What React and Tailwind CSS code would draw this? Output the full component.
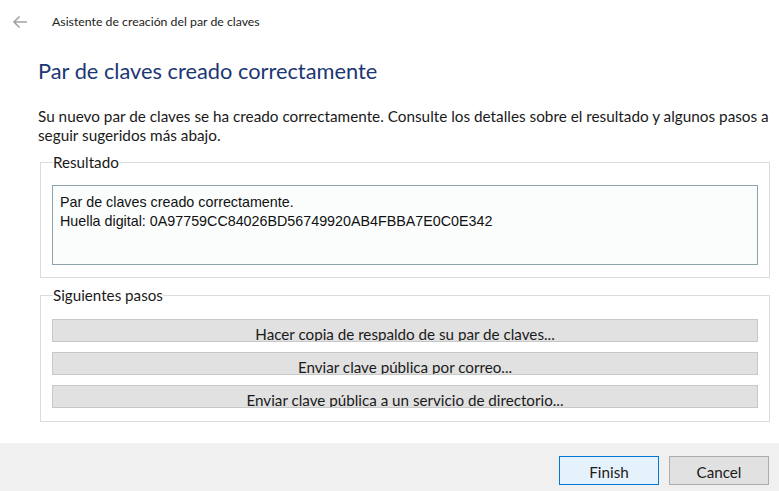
import { useState } from "react";

const STEPS = [
  "Hacer copia de respaldo de su par de claves...",
  "Enviar clave pública por correo...",
  "Enviar clave pública a un servicio de directorio...",
];

function BackArrow() {
  return (
    <svg width="16" height="14" viewBox="0 0 16 14" fill="none">
      <path d="M15 7H2M7.5 1.5L2 7l5.5 5.5" stroke="#a3a3a3" strokeWidth="1.6" />
    </svg>
  );
}

export default function App() {
  const [result] = useState({
    message: "Par de claves creado correctamente.",
    fingerprint: "0A97759CC84026BD56749920AB4FBBA7E0C0E342",
  });

  return (
    <div className="h-[491px] w-full flex flex-col bg-white text-[#1a1a1a] font-['Lato',sans-serif] overflow-hidden">
      {/* Title bar */}
      <div className="flex items-center h-[44px] pl-[12px]">
        <BackArrow />
        <span className="ml-[24px] text-[12.3px] text-[#222]">
          Asistente de creación del par de claves
        </span>
      </div>

      <div className="flex-1 pl-[38px] pr-[8px]">
        <h1 className="mt-[13px] text-[21.8px] leading-[28px] text-[#1c3774]">
          Par de claves creado correctamente
        </h1>

        <p className="mt-[22px] text-[15.3px] leading-[19px] whitespace-nowrap">
          Su nuevo par de claves se ha creado correctamente. Consulte los detalles sobre el resultado y algunos pasos a
          <br />
          seguir sugeridos más abajo.
        </p>

        {/* Resultado */}
        <fieldset className="mt-[8px] ml-[2px] mr-[1px] border border-[#dcdcdc] px-[11px] pt-[14px] pb-[12px]">
          <legend className="ml-[1px] text-[15.2px] leading-[18px]">Resultado</legend>
          <div className="h-[80px] border border-[#8aa3ad] bg-[#fbfdfd] px-[7px] pt-[7px] text-[14.3px] leading-[19px] font-['Liberation_Sans',sans-serif] text-[#111]">
            <div>{result.message}</div>
            <div>Huella digital: {result.fingerprint}</div>
          </div>
        </fieldset>

        {/* Siguientes pasos */}
        <fieldset className="mt-[8px] ml-[2px] mr-[1px] border border-[#dcdcdc] px-[11px] pt-[15px] pb-[13px]">
          <legend className="ml-[1px] text-[15.2px] leading-[18px]">Siguientes pasos</legend>
          <div className="flex flex-col gap-[10px]">
            {STEPS.map((s) => (
              <button
                key={s}
                className="h-[23px] overflow-hidden flex justify-center items-start pt-[5px] bg-[#e1e1e1] border border-[#c8c8c8] text-[15.2px] leading-[18px]"
              >
                {s}
              </button>
            ))}
          </div>
        </fieldset>
      </div>

      {/* Footer */}
      <div className="h-[48px] bg-[#f0f0f0] flex justify-end items-start pt-[13px] pr-[10px] gap-[10px]">
        <button className="w-[100px] h-[29px] bg-[#e5f1fb] border border-[#0078d7] text-[15.2px] leading-[27px] pt-[2px]">
          Finish
        </button>
        <button className="w-[100px] h-[29px] bg-[#e1e1e1] border border-[#adadad] text-[15.2px] leading-[27px] pt-[2px]">
          Cancel
        </button>
      </div>
    </div>
  );
}
